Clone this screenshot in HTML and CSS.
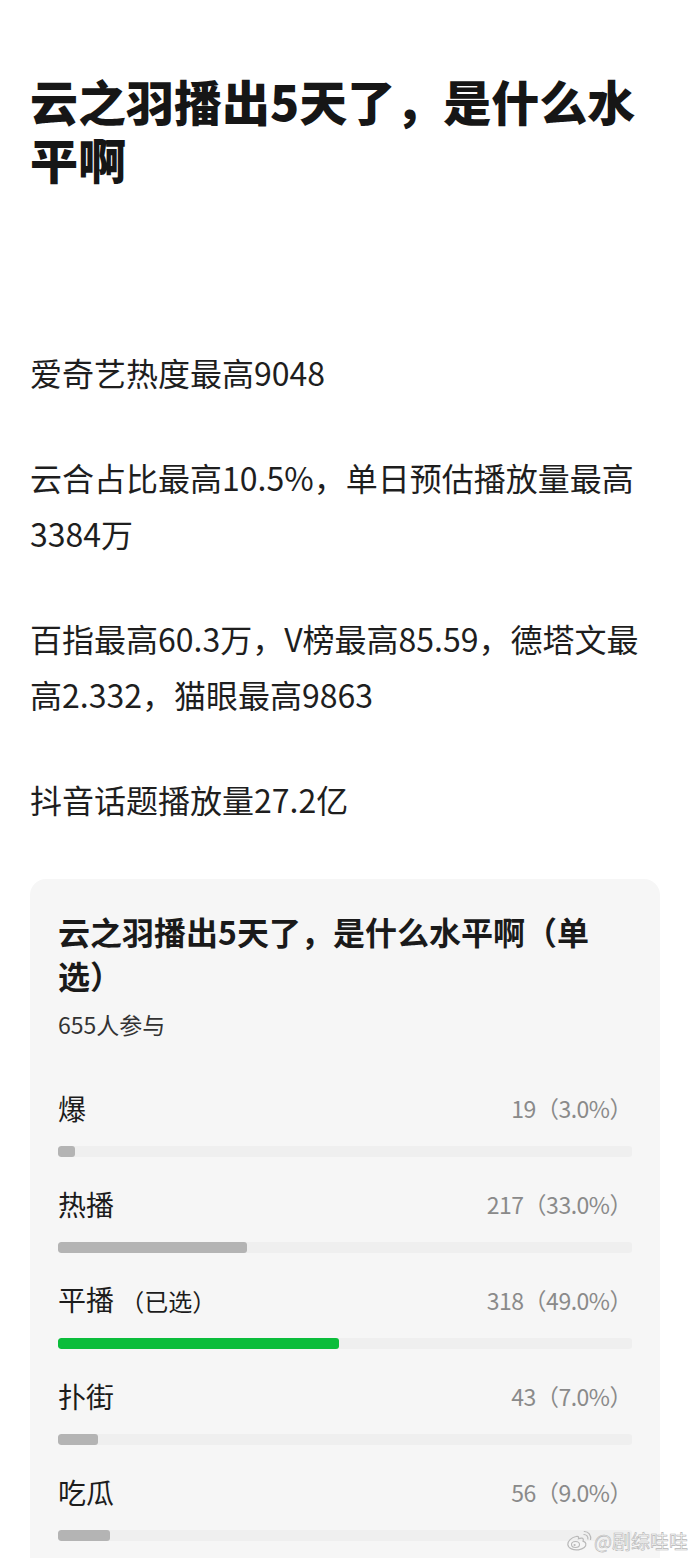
FILE: index.html
```html
<!DOCTYPE html>
<html>
	<head>
		<meta charset="UTF-8">
		<title>云之羽播出5天了，是什么水平啊</title>
		<link rel="stylesheet" href="styles.css">
	</head>
	<body>
		<div class="article">
			<h1 class="title">云之羽播出5天了，是什么水平啊</h1>
			<p class="para">爱奇艺热度最高9048</p>
			<p class="para">云合占比最高10.5%，单日预估播放量最高3384万</p>
			<p class="para">百指最高60.3万，V榜最高85.59，德塔文最高2.332，猫眼最高9863</p>
			<p class="para">抖音话题播放量27.2亿</p>

			<div class="poll">
				<h2 class="poll-title">云之羽播出5天了，是什么水平啊（单选）</h2>
				<p class="poll-count">655人参与</p>

				<div class="option">
					<div class="option-head"><span class="option-name">爆</span><span class="option-num">19（3.0%）</span></div>
					<div class="track"><div class="fill" style="width: 3%"></div></div>
				</div>
				<div class="option">
					<div class="option-head"><span class="option-name">热播</span><span class="option-num">217（33.0%）</span></div>
					<div class="track"><div class="fill" style="width: 33%"></div></div>
				</div>
				<div class="option">
					<div class="option-head"><span class="option-name">平播 <em class="chosen">（已选）</em></span><span class="option-num">318（49.0%）</span></div>
					<div class="track"><div class="fill fill-green" style="width: 49%"></div></div>
				</div>
				<div class="option">
					<div class="option-head"><span class="option-name">扑街</span><span class="option-num">43（7.0%）</span></div>
					<div class="track"><div class="fill" style="width: 7%"></div></div>
				</div>
				<div class="option">
					<div class="option-head"><span class="option-name">吃瓜</span><span class="option-num">56（9.0%）</span></div>
					<div class="track"><div class="fill" style="width: 9%"></div></div>
				</div>
			</div>
		</div>

		<div class="watermark">
			<svg width="26" height="22" viewBox="0 0 26 22">
				<path d="M10 6.5C5.5 7.5 1.5 11 1.8 14.5C2.2 18.5 7.5 20.5 12.5 19.8C17.5 19.2 20.5 16.5 19.8 13.5C19.4 11.8 17.5 11.5 17 11.2C17.6 9.8 17.5 8.5 16 8.2C14.5 7.9 12.5 8.8 12.5 8.8C13 7 12.3 5.9 10 6.5Z" fill="none" stroke="#b9b9b9" stroke-width="1.2"/>
				<ellipse cx="9.5" cy="14.5" rx="4" ry="3" fill="none" stroke="#b9b9b9" stroke-width="1.1"/>
				<circle cx="8.6" cy="15" r="1.1" fill="#b9b9b9"/>
				<path d="M17.5 4.5C20.5 4.3 22.5 6.5 21.8 9.5" fill="none" stroke="#b9b9b9" stroke-width="1.2"/>
				<path d="M17.8 1.5C22.5 1.2 25.5 5 24.5 10" fill="none" stroke="#b9b9b9" stroke-width="1.2"/>
			</svg>
			<span class="watermark-text">@剧综哇哇</span>
		</div>
	</body>
</html>
```

FILE: styles.css
```css
body{
	margin: 0;
	background: #fff;
	font-family: "Noto Sans CJK SC", "Noto Sans", sans-serif;
	color: #1c1c1c;
	overflow: hidden;
}
.article{
	padding: 0 30px;
}
.title{
	margin: 71px 0 0;
	font-size: 48px;
	line-height: 58px;
	font-weight: 900;
	color: #161616;
}
.para{
	margin: 0 0 49px;
	font-size: 32px;
	line-height: 56px;
	color: #1e1e1e;
}
.article .para:first-of-type{
	margin-top: 157px;
}
.poll{
	margin-top: 52px;
	background: #f6f6f6;
	border-radius: 16px;
	padding: 30px 28px 40px;
}
.poll-title{
	margin: 0;
	font-size: 32px;
	line-height: 44px;
	font-weight: 700;
	color: #1a1a1a;
}
.poll-count{
	margin: 12px 0 0;
	font-size: 23px;
	line-height: 30px;
	color: #333;
}
.option{
	margin-bottom: 27px;
}
.poll-count + .option{
	margin-top: 49px;
}
.option-head{
	display: flex;
	justify-content: space-between;
	align-items: center;
	height: 40px;
}
.option-name{
	font-size: 28px;
	line-height: 40px;
	color: #1c1c1c;
}
.chosen{
	font-style: normal;
	font-size: 24px;
}
.option-num{
	font-size: 23px;
	color: #8a8a8a;
	letter-spacing: -0.5px;
}
.track{
	margin-top: 18px;
	height: 11px;
	background: #efefef;
	border-radius: 3px;
	overflow: hidden;
}
.fill{
	height: 100%;
	background: #b4b4b4;
	border-radius: 3px;
}
.fill-green{
	background: #0bbd3b;
}
.watermark{
	position: absolute;
	top: 1529px;
	left: 566px;
	display: flex;
	align-items: center;
	gap: 2px;
	height: 24px;
}
.watermark-text{
	font-size: 19px;
	line-height: 22px;
	color: #fafafa;
	-webkit-text-stroke: 0.6px #b5b5b5;
}
```
